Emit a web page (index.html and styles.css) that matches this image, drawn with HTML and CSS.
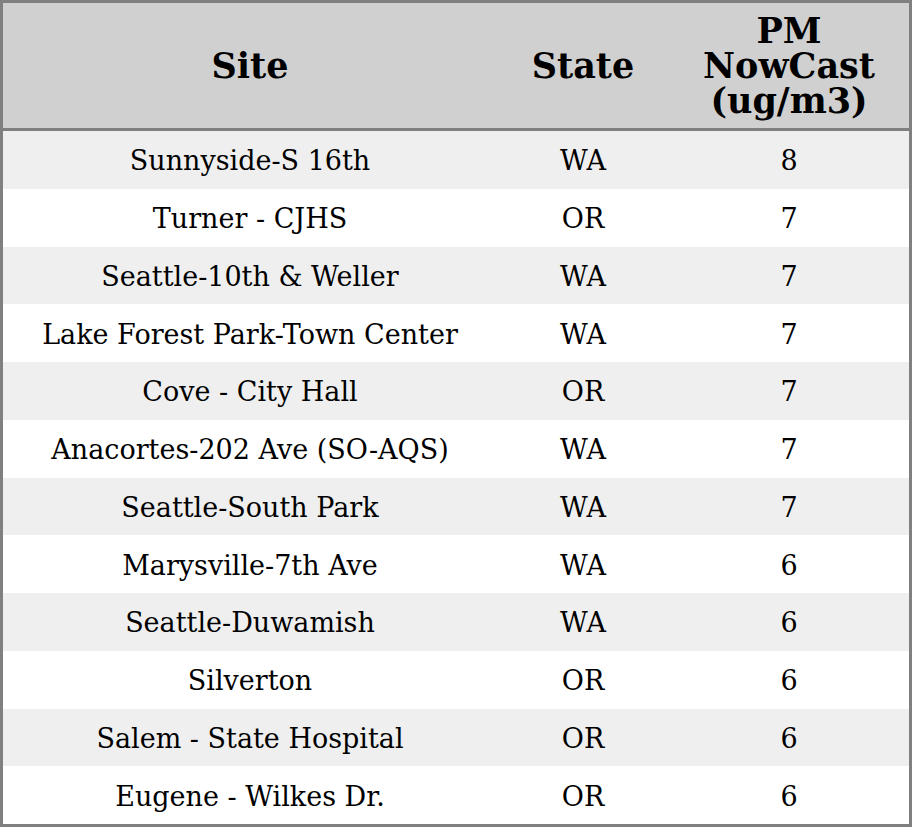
FILE: index.html
```html
<!DOCTYPE html>
<html>
<head>
<meta charset="utf-8">
<link rel="stylesheet" href="styles.css">
</head>
<body>
<table class="aq">
  <colgroup>
    <col class="c-site"><col class="c-state"><col class="c-pm">
  </colgroup>
  <thead>
    <tr><th>Site</th><th>State</th><th>PM<br>NowCast<br>(ug/m3)</th></tr>
  </thead>
  <tbody>
    <tr><td>Sunnyside-S 16th</td><td>WA</td><td>8</td></tr>
    <tr><td>Turner - CJHS</td><td>OR</td><td>7</td></tr>
    <tr><td>Seattle-10th &amp; Weller</td><td>WA</td><td>7</td></tr>
    <tr><td>Lake Forest Park-Town Center</td><td>WA</td><td>7</td></tr>
    <tr><td>Cove - City Hall</td><td>OR</td><td>7</td></tr>
    <tr><td>Anacortes-202 Ave (SO-AQS)</td><td>WA</td><td>7</td></tr>
    <tr><td>Seattle-South Park</td><td>WA</td><td>7</td></tr>
    <tr><td>Marysville-7th Ave</td><td>WA</td><td>6</td></tr>
    <tr><td>Seattle-Duwamish</td><td>WA</td><td>6</td></tr>
    <tr><td>Silverton</td><td>OR</td><td>6</td></tr>
    <tr><td>Salem - State Hospital</td><td>OR</td><td>6</td></tr>
    <tr><td>Eugene - Wilkes Dr.</td><td>OR</td><td>6</td></tr>
  </tbody>
</table>
</body>
</html>
```
FILE: styles.css
```css
html, body {
  margin: 0;
  padding: 0;
  background: #ffffff;
}
.aq {
  width: 912px;
  height: 827px;
  border-collapse: separate;
  border-spacing: 0;
  border: 3px solid #808080;
  box-sizing: border-box;
  table-layout: fixed;
  font-family: "DejaVu Serif", serif;
  color: #000;
}
.c-site { width: 494px; }
.c-state { width: 172px; }
.c-pm { width: 240px; }
.aq th {
  background: #d0d0d0;
  font-size: 35px;
  line-height: 35px;
  font-weight: bold;
  text-align: center;
  height: 125px;
  padding: 0;
  border-bottom: 3px solid #808080;
}
.aq td {
  font-size: 27px;
  text-align: center;
  height: 57.75px;
  padding: 2px 0 0 0;
  box-sizing: border-box;
}
.aq tbody tr:nth-child(odd) td {
  background: #efefef;
}
```
